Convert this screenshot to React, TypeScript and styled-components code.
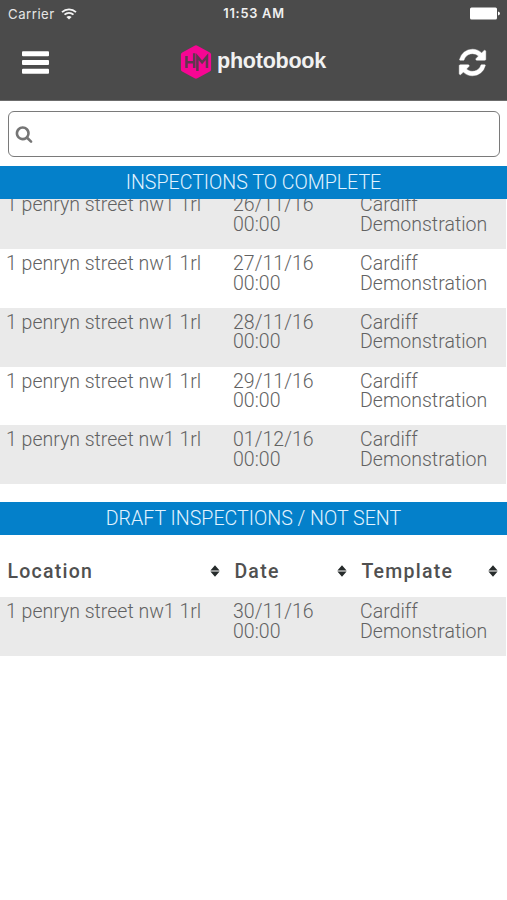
import React from "react";
import styled, { createGlobalStyle } from "styled-components";

const GlobalStyle = createGlobalStyle`
  * { box-sizing: border-box; }
  body { margin: 0; background: #fff; font-family: Roboto, "Liberation Sans", sans-serif; }
  svg { display: block; }
`;

const Screen = styled.main`
  width: 507px;
  height: 900px;
  overflow: hidden;
  background: #fff;
`;

const Header = styled.header`
  height: 101px;
  background: #4b4b4b;
  border-bottom: 1px solid #6c6c6c;
  color: #fff;
`;

const StatusBar = styled.div`
  display: grid;
  grid-template-columns: 1fr auto 1fr;
  align-items: center;
  height: 27px;
  padding: 0 7px 0 8px;
  font-family: Inter, sans-serif;
  font-size: 13.2px;
`;

const Carrier = styled.div`
  display: flex;
  align-items: center;
  gap: 6px;
  color: #e6e6e6;
  letter-spacing: 0.5px;
`;

const Clock = styled.div`
  font-weight: 600;
  letter-spacing: 0.75px;
  font-size: 12.8px;
  color: #f0f0f0;
`;

const Battery = styled.div`
  justify-self: end;
`;

const NavBar = styled.nav`
  display: flex;
  align-items: center;
  justify-content: space-between;
  height: 70px;
  padding: 0 19px 0 22px;
`;

const IconButton = styled.button`
  padding: 0;
  border: 0;
  background: none;
  color: #fff;
`;

const Brand = styled.div`
  display: flex;
  align-items: center;
  gap: 5px;
`;

const BrandName = styled.span`
  font-family: "Liberation Sans", Arial, sans-serif;
  font-weight: 700;
  font-size: 21.6px;
  line-height: 24px;
  letter-spacing: -0.3px;
  color: #f1f1f1;
  margin-top: -3px;
`;

const SearchField = styled.label`
  display: flex;
  align-items: center;
  height: 46px;
  margin: 10px 7px 9px 8px;
  padding-left: 6px;
  border: 1.5px solid #7a7a7a;
  border-radius: 6px;
  color: #757575;
`;

const SearchInput = styled.input`
  flex: 1;
  border: 0;
  outline: 0;
  background: transparent;
  font: inherit;
`;

const Banner = styled.h2`
  margin: 0;
  height: 33px;
  background: #0480ca;
  color: #e2f3ff;
  font-size: 19.6px;
  font-weight: 300;
  line-height: 34px;
  text-align: center;
`;

const ScrolledList = styled.div`
  display: flex;
  flex-direction: column;
  justify-content: flex-end;
  height: 285px;
  margin-bottom: 18px;
  overflow: hidden;
`;

const Row = styled.div<{ $shaded: boolean }>`
  display: grid;
  grid-template-columns: 227px 127px 1fr;
  flex: none;
  height: 58.75px;
  margin-right: 1px;
  padding: 5px 0 0 6px;
  background: ${(p) => (p.$shaded ? "#eaeaea" : "#fff")};
  color: #626262;
  font-size: 19.5px;
  font-weight: 300;
  line-height: 19.5px;
`;

const Cell = styled.div<{ $spacing: string }>`
  white-space: pre-line;
  letter-spacing: ${(p) => p.$spacing};
`;

const Columns = styled.div`
  display: grid;
  grid-template-columns: 227px 127px 1fr;
  align-items: center;
  height: 62px;
  padding: 10px 9px 0 7.4px;
`;

const Column = styled.div`
  display: flex;
  align-items: center;
  justify-content: space-between;
  color: #505050;
  font-size: 19.5px;
  font-weight: 500;
  letter-spacing: 1.25px;

  &:not(:last-child) { padding-right: 14px; }
`;

const WifiIcon = () => (
  <svg width="16" height="12" viewBox="0 0 16 12" fill="none" stroke="#f4f4f4" strokeWidth="1.8">
    <path d="M1 4.2C5 .4 11 .4 15 4.2M3.5 6.7c2.6-2.3 6.4-2.3 9 0" />
    <path d="M8 11.6 5.4 9Q8 6.8 10.6 9Z" fill="#f4f4f4" stroke="none" />
  </svg>
);

const BatteryIcon = () => (
  <svg width="30" height="13" viewBox="0 0 30 13" fill="#fff">
    <rect width="27" height="12" x="0" y=".5" rx="1.5" />
    <path d="M28 4.5q2 .4 2 2t-2 2z" />
  </svg>
);

const MenuIcon = () => (
  <svg width="27" height="23" viewBox="0 0 27 23" fill="#fff">
    <rect width="27" height="5" y=".2" rx="1" />
    <rect width="27" height="5" y="9" rx="1" />
    <rect width="27" height="5" y="17.8" rx="1" />
  </svg>
);

const BrandIcon = () => (
  <svg width="32" height="34" viewBox="0 0 32 34">
    <path d="M14.6.7q1.4-.8 2.8 0l12.4 6.7q1.3.7 1.3 2.2v14.8q0 1.5-1.3 2.2l-12.4 6.7q-1.4.8-2.8 0L2.2 26.6Q.9 25.9.9 24.4V9.6q0-1.5 1.3-2.2z" fill="#f60693" />
    <path d="M6.5 11v12M6.5 17.3h7.3M14.2 8.3v14.8M17.4 26V11.7l4.7 5.6 4.9-5.6v11.4" fill="none" stroke="#60364f" strokeWidth="2.5" />
  </svg>
);

const RefreshIcon = () => (
  <svg width="31" height="31" viewBox="0 0 1792 1792" fill="currentColor" stroke="currentColor" strokeWidth="25">
    <path d="M1639 1056q0 5-1 7-64 268-268 434.5t-478 166.5q-146 0-282.5-55t-243.5-157l-129 129q-19 19-45 19t-45-19-19-45v-448q0-26 19-45t45-19h448q26 0 45 19t19 45-19 45l-137 137q71 66 161 102t187 36q134 0 250-65t186-179q11-17 53-117 8-23 30-23h192q13 0 22.5 9.5t9.5 22.5zm25-800v448q0 26-19 45t-45 19h-448q-26 0-45-19t-19-45 19-45l138-138q-148-137-349-137-134 0-250 65t-186 179q-11 17-53 117-8 23-30 23h-199q-13 0-22.5-9.5t-9.5-22.5v-7q65-268 270-434.5t480-166.5q146 0 284 55.5t245 156.5l130-129q19-19 45-19t45 19 19 45z" />
  </svg>
);

const SearchIcon = () => (
  <svg width="18" height="18" viewBox="0 0 1792 1792" fill="currentColor">
    <path d="M1216 832q0-185-131.5-316.5t-316.5-131.5-316.5 131.5-131.5 316.5 131.5 316.5 316.5 131.5 316.5-131.5 131.5-316.5zm512 832q0 52-38 90t-90 38q-54 0-90-38l-343-342q-179 124-399 124-143 0-273.5-55.5t-225-150-150-225-55.5-273.5 55.5-273.5 150-225 225-150 273.5-55.5 273.5 55.5 225 150 150 225 55.5 273.5q0 220-124 399l343 343q37 37 37 90z" />
  </svg>
);

const SortIcon = () => (
  <svg width="10" height="12" viewBox="0 0 10 12" fill="#262b2b">
    <path d="M5 .3 9.6 5.5H.4zM5 11.7.4 6.5h9.2z" />
  </svg>
);

const pending = ["26/11/16", "27/11/16", "28/11/16", "29/11/16", "01/12/16"];

const InspectionRow = ({ date, shaded }: { date: string; shaded: boolean }) => (
  <Row $shaded={shaded}>
    <Cell $spacing="0">1 penryn street nw1 1rl</Cell>
    <Cell $spacing="0.03px">{`${date}\n00:00`}</Cell>
    <Cell $spacing="0.03px">{"Cardiff\nDemonstration"}</Cell>
  </Row>
);

export default function App() {
  return (
    <>
      <GlobalStyle />
      <Screen>
        <Header>
          <StatusBar>
            <Carrier>Carrier <WifiIcon /></Carrier>
            <Clock>11:53 AM</Clock>
            <Battery><BatteryIcon /></Battery>
          </StatusBar>
          <NavBar>
            <IconButton aria-label="Menu"><MenuIcon /></IconButton>
            <Brand>
              <BrandIcon />
              <BrandName>photobook</BrandName>
            </Brand>
            <IconButton aria-label="Refresh"><RefreshIcon /></IconButton>
          </NavBar>
        </Header>
        <SearchField>
          <SearchIcon />
          <SearchInput aria-label="Search" />
        </SearchField>
        <Banner>INSPECTIONS TO COMPLETE</Banner>
        <ScrolledList>
          {pending.map((date, i) => (
            <InspectionRow key={date} date={date} shaded={i % 2 === 0} />
          ))}
        </ScrolledList>
        <Banner>DRAFT INSPECTIONS / NOT SENT</Banner>
        <Columns>
          {["Location", "Date", "Template"].map((label) => (
            <Column key={label}>{label}<SortIcon /></Column>
          ))}
        </Columns>
        <InspectionRow date="30/11/16" shaded />
      </Screen>
    </>
  );
}
